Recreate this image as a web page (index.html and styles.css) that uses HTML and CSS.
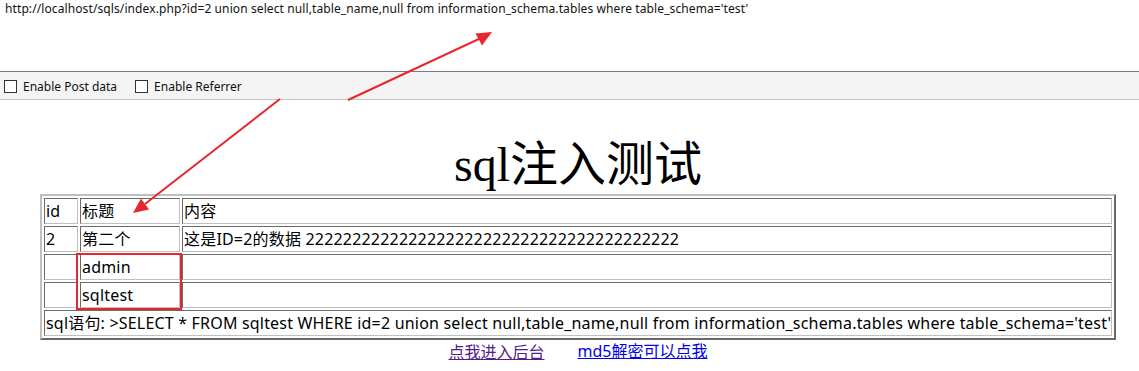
FILE: index.html
```html
<!DOCTYPE html>
<html lang="zh-CN">
<head>
<meta charset="utf-8">
<title>sql注入测试</title>
<link rel="stylesheet" href="styles.css">
</head>
<body>
<div class="hackbar">
  <div class="url">http://localhost/sqls/index.php?id=2 union select null,table_name,null from information_schema.tables where table_schema='test'</div>
  <div class="toolbar">
    <label class="opt"><span class="cb"></span>Enable Post data</label>
    <label class="opt"><span class="cb"></span>Enable Referrer</label>
  </div>
</div>
<main class="page">
  <h1 class="title">sql注入测试</h1>
  <table class="data">
    <tr><td class="c1">id</td><td class="c2">标题</td><td>内容</td></tr>
    <tr><td>2</td><td>第二个</td><td>这是ID=2的数据 2222222222222222222222222222222222222222</td></tr>
    <tr><td></td><td>admin</td><td></td></tr>
    <tr><td></td><td>sqltest</td><td></td></tr>
    <tr><td colspan="3">sql语句: &gt;SELECT * FROM sqltest WHERE id=2 union select null,table_name,null from information_schema.tables where table_schema='test'</td></tr>
  </table>
  <div class="links">
    <a href="#" class="visited">点我进入后台</a>
    <a href="#" class="fresh">md5解密可以点我</a>
  </div>
</main>
<svg class="annot" width="1139" height="371" viewBox="0 0 1139 371">
  <line x1="348" y1="100" x2="481" y2="38" stroke="#e8262d" stroke-width="2"/>
  <polygon points="492,32 475.5,33.5 482,45.5" fill="#e8262d"/>
  <line x1="280" y1="99" x2="145" y2="204" stroke="#e8262d" stroke-width="2"/>
  <polygon points="133,213 141,198.5 149,209.5" fill="#e8262d"/>
  <rect x="77" y="254" width="104" height="55" fill="none" stroke="#e8262d" stroke-width="2"/>
</svg>
</body>
</html>
```
FILE: styles.css
```css
html, body { margin: 0; padding: 0; background: #fff; }
body { position: relative; width: 1139px; height: 371px; overflow: hidden; }

.hackbar { display: flex; flex-direction: column; }
.url {
  height: 70px;
  padding: 1px 0 0 5px;
  font: 12px/16px "Noto Sans", "Noto Sans CJK SC", sans-serif;
  letter-spacing: 0.1px;
  color: #111;
  white-space: nowrap;
}
.toolbar {
  display: flex;
  align-items: center;
  gap: 18px;
  height: 27px;
  padding: 0 0 0 4px;
  background: #f4f4f4;
  border-top: 1px solid #7b7b7b;
  border-bottom: 1px solid #c4c4c4;
}
.opt {
  display: flex;
  align-items: center;
  gap: 6px;
  font: 12px/16px "Noto Sans", sans-serif;
  color: #111;
  padding-top: 2px;
}
.cb {
  width: 11px;
  height: 11px;
  border: 1px solid #333;
  background: #fff;
}

.page { padding-left: 17px; }
.title {
  margin: 38px 0 3px;
  font: normal 48px/53px "Liberation Serif", "Noto Sans CJK SC", serif;
  text-align: center;
  color: #000;
}

.data {
  margin: 0 auto;
  width: 1076px;
  table-layout: fixed;
  border-collapse: separate;
  border-spacing: 2px;
  border: 2px solid;
  border-color: #c0c0c0 #6a6a6a #6a6a6a #c0c0c0;
}
.data td {
  padding: 1px;
  height: 22px;
  border: 1px solid;
  border-color: #6a6a6a #c0c0c0 #c0c0c0 #6a6a6a;
  font: 16px/22px "Noto Sans", "Noto Sans CJK SC", sans-serif;
  letter-spacing: 0.19px;
  white-space: nowrap;
  color: #000;
  vertical-align: middle;
}
.data td.c1 { width: 30px; }
.data td.c2 { width: 96px; }

.links {
  display: flex;
  justify-content: center;
  gap: 33px;
  font: 16px/22px "Noto Sans CJK SC", sans-serif;
}
.links a { text-decoration: underline; }
.links .visited { color: #551a8b; }
.links .fresh { color: #0000ee; font-family: "Noto Sans", "Noto Sans CJK SC", sans-serif; }

.annot { position: absolute; left: 0; top: 0; pointer-events: none; }
```
